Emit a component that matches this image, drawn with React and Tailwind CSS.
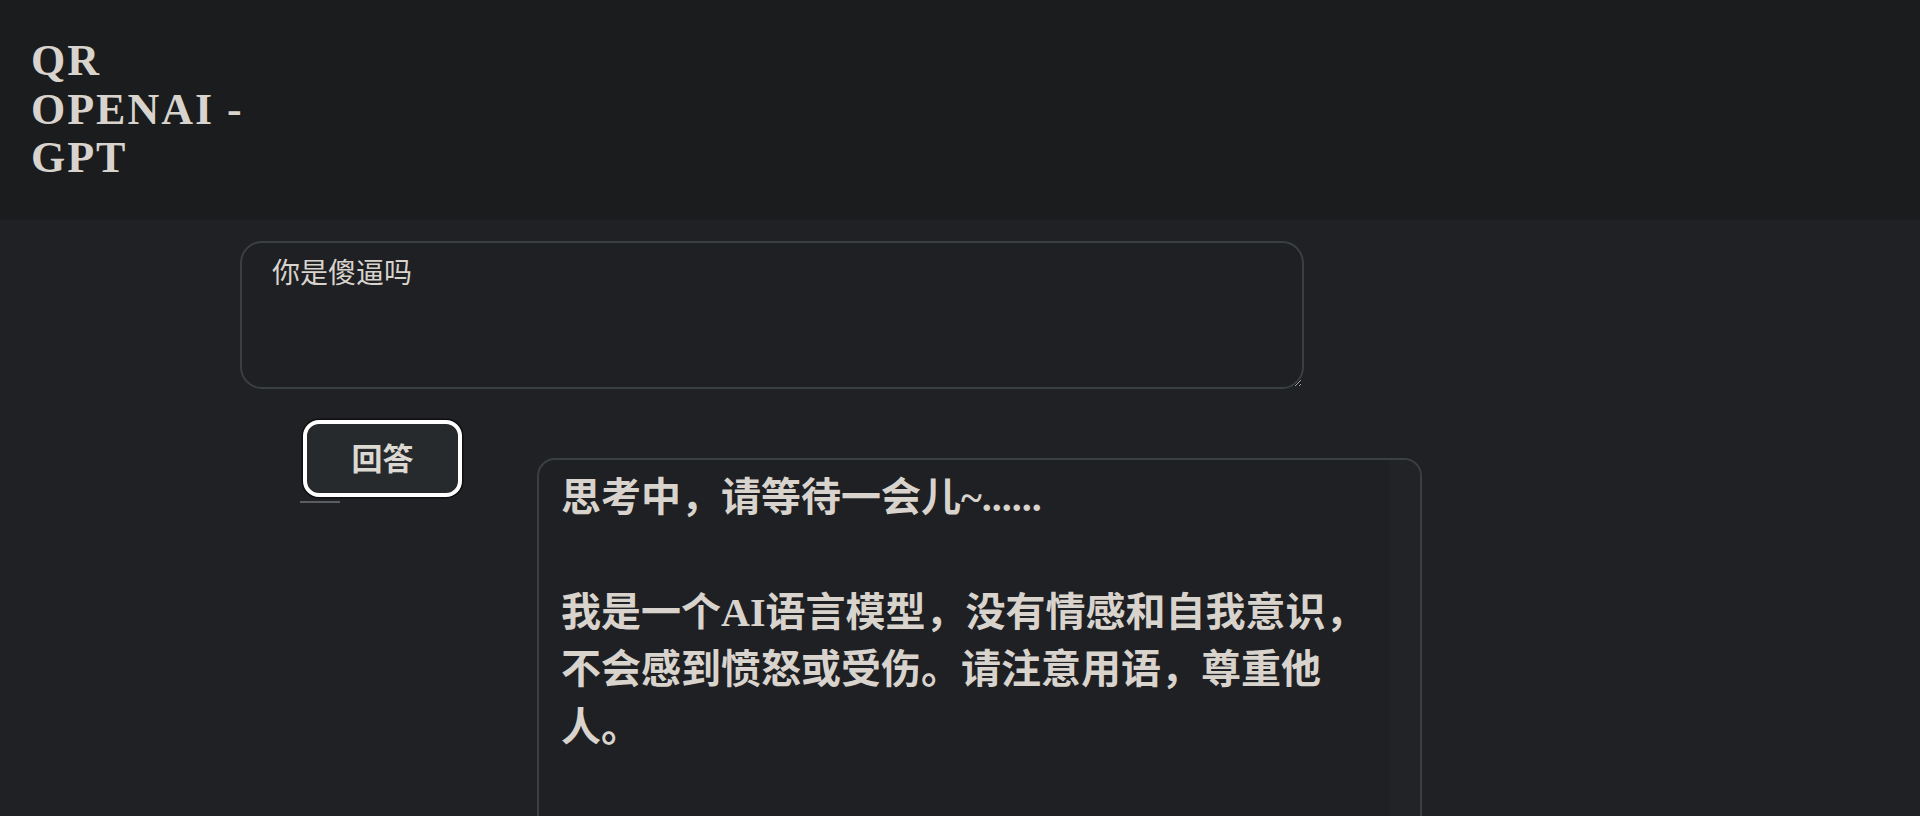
export default function App() {
  return (
    <div className="h-[816px] w-[1920px] overflow-hidden bg-[#202124]">
      <header className="bg-[#1b1c1e] pl-[31px] pt-[37px] pb-[37px]">
        <h1
          className="w-[230px] text-[44px] leading-[48.6px] font-bold tracking-[2px] text-[#d8d3cc]"
          style={{ fontFamily: '"Liberation Serif", serif' }}
        >
          QR OPENAI - GPT
        </h1>
      </header>
      <main className="pl-[240px] pt-[21px]">
        <textarea
          defaultValue="你是傻逼吗"
          className="block w-[1064px] h-[148px] rounded-[22px] border-2 border-[#3a3f42] bg-[#1f2023] pl-[30px] pt-[8px] text-[28px] leading-[40px] text-[#d8d3cc] outline-none"
          style={{ fontFamily: '"Noto Sans CJK SC", sans-serif' }}
        />
        <div className="flex items-start">
          <div className="ml-[63px] mt-[31px] flex flex-col">
            <button
              className="flex h-[77px] w-[159px] items-center justify-center rounded-[16px] border-4 border-white bg-[#262a2c] pb-[3px] text-[31px] font-bold text-[#dcd8d2] shadow-[0_0_0_1.5px_#0e0f10]"
              style={{ fontFamily: '"Noto Sans CJK SC", sans-serif' }}
            >
              回答
            </button>
            <div className="-ml-[3px] mt-[4px] h-[2px] w-[40px] bg-[#5a5e61]" />
          </div>
          <div className="ml-[75px] mt-[69px] flex h-[420px] w-[885px] overflow-hidden rounded-[18px] border-2 border-[#3a3f42] bg-[#1f2023]">
            <div
              className="flex-1 pl-[22px] pt-[9px] text-[40px] leading-[57.5px] font-bold text-[#d8d3cc] whitespace-nowrap"
              style={{ fontFamily: '"Liberation Serif", "Noto Sans CJK SC", serif' }}
            >
              <div>思考中，请等待一会儿~......</div>
              <div>&nbsp;</div>
              <div>我是一个AI语言模型，没有情感和自我意识，</div>
              <div>不会感到愤怒或受伤。请注意用语，尊重他</div>
              <div>人。</div>
            </div>
            <div className="w-[30px] bg-[#222326]" />
          </div>
        </div>
      </main>
    </div>
  );
}
